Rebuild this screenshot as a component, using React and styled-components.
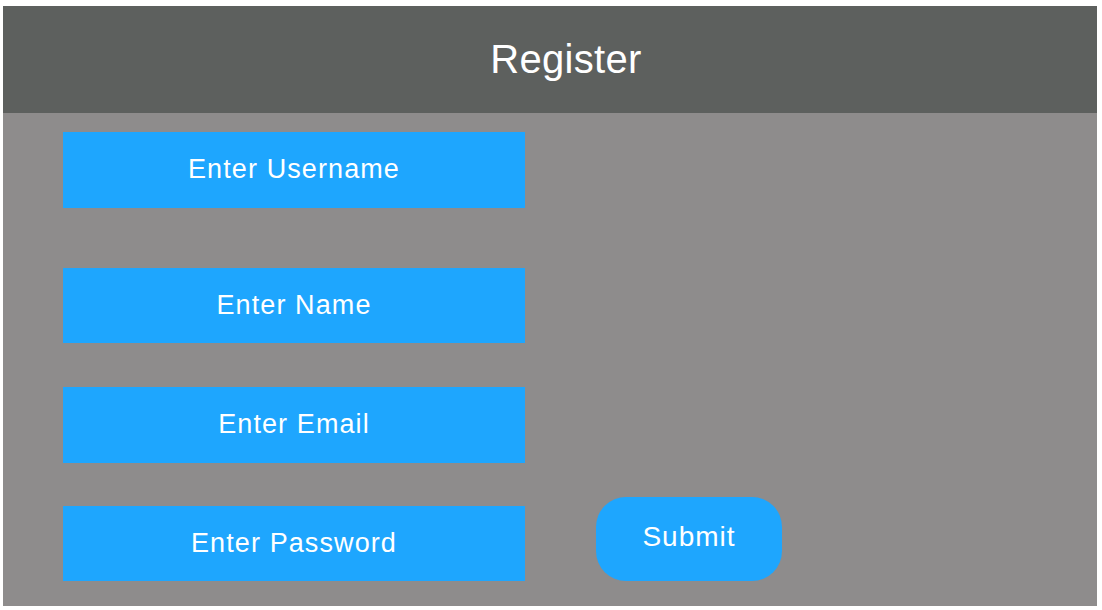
import React, { useState } from "react";
import styled, { createGlobalStyle } from "styled-components";

const GlobalStyle = createGlobalStyle`
  body {
    margin: 0;
    background: #ffffff;
    font-family: "Liberation Sans", Arial, sans-serif;
  }
`;

const fields = [
  { name: "username", placeholder: "Enter Username", type: "text" },
  { name: "name", placeholder: "Enter Name", type: "text" },
  { name: "email", placeholder: "Enter Email", type: "email" },
  { name: "password", placeholder: "Enter Password", type: "password" },
];

const Register = () => {
  const [form, setForm] = useState({});

  const onChange = (e) => {
    setForm({ ...form, [e.target.name]: e.target.value });
  };

  return (
    <Page>
      <GlobalStyle />
      <Header>
        <Title>Register</Title>
      </Header>
      <Body>
        <Fields>
          {fields.map((f, i) => (
            <Field
              key={f.name}
              name={f.name}
              type={f.type}
              placeholder={f.placeholder}
              value={form[f.name] || ""}
              onChange={onChange}
              $top={i === 0 ? 0 : i === 1 ? 60 : i === 2 ? 44 : 43}
            />
          ))}
        </Fields>
        <Submit type="button">Submit</Submit>
      </Body>
    </Page>
  );
};

const Page = styled.div`
  padding: 6px 5px 4px 3px;
`;

const Header = styled.div`
  height: 107px;
  background-color: #5d605e;
  display: flex;
  align-items: center;
  justify-content: center;
  padding-left: 32px;
  box-sizing: border-box;
`;

const Title = styled.h1`
  margin: 0;
  font-size: 40px;
  font-weight: normal;
  color: #ffffff;
  letter-spacing: 0.3px;
`;

const Body = styled.div`
  height: 493px;
  box-sizing: border-box;
  background-color: #8e8c8c;
  padding: 19px 0 25px 60px;
  display: flex;
  align-items: flex-end;
  gap: 71px;
`;

const Fields = styled.div`
  display: flex;
  flex-direction: column;
  align-self: stretch;
`;

const Field = styled.input`
  width: 462px;
  height: 76px;
  margin-top: ${(p) => p.$top}px;
  box-sizing: border-box;
  border: none;
  outline: none;
  background-color: #1ea6fe;
  color: #ffffff;
  font-family: "Liberation Sans", Arial, sans-serif;
  font-size: 27px;
  letter-spacing: 1.1px;
  text-align: center;

  &::placeholder {
    color: #ffffff;
    opacity: 1;
  }
`;

const Submit = styled.button`
  width: 186px;
  height: 84px;
  border: none;
  border-radius: 30px;
  background-color: #1ea6fe;
  color: #ffffff;
  font-family: "Liberation Sans", Arial, sans-serif;
  font-size: 28px;
  letter-spacing: 1px;
  padding: 0 0 5px;
  cursor: pointer;
`;

export default Register;
